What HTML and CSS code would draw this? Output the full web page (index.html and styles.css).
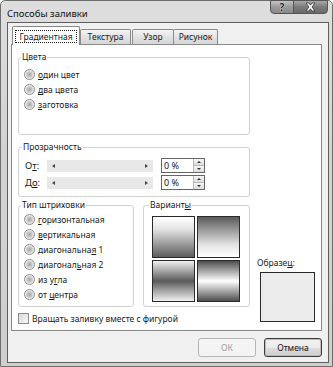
FILE: index.html
```html
<!DOCTYPE html>
<html>
  <head>
    <title>Способы заливки</title>
    <meta charset="UTF-8" />
    <link rel="stylesheet" href="styles.css">
  </head>
  <body>
    <div class="window">
      <div class="titlebar">
        <span class="title">Способы заливки</span>
        <div class="caption-buttons">
          <span class="cap-btn help">?</span>
          <span class="cap-btn close">
            <svg width="13" height="10" viewBox="0 0 13 10">
              <path d="M2 1h3l1.5 2.2L8 1h3L8 5l3 4H8L6.5 6.8 5 9H2l3-4z" fill="#fff" stroke="#333" stroke-width="0.8" />
            </svg>
          </span>
        </div>
      </div>

      <div class="client">
        <div class="tabs">
          <span class="tab active"><span class="focus">Градиентная</span></span>
          <span class="tab tab-texture">Текстура</span>
          <span class="tab tab-pattern">Узор</span>
          <span class="tab tab-picture">Рисунок</span>
        </div>

        <div class="panel">
          <fieldset class="group colors">
            <legend>Цвета</legend>
            <label class="radio"><span class="dot"></span><span><u>о</u>дин цвет</span></label>
            <label class="radio"><span class="dot"></span><span><u>д</u>ва цвета</span></label>
            <label class="radio"><span class="dot"></span><span><u>з</u>аготовка</span></label>
          </fieldset>

          <fieldset class="group transparency">
            <legend>Прозрачность</legend>
            <div class="trow">
              <span class="tlabel">О<u>т</u>:</span>
              <div class="slider"><i class="arr-left"></i><i class="arr-right"></i></div>
              <div class="spin">
                <span class="val">0 %</span>
                <span class="arrows"><i class="up"></i><i class="down"></i></span>
              </div>
            </div>
            <div class="trow">
              <span class="tlabel">Д<u>о</u>:</span>
              <div class="slider"><i class="arr-left"></i><i class="arr-right"></i></div>
              <div class="spin">
                <span class="val">0 %</span>
                <span class="arrows"><i class="up"></i><i class="down"></i></span>
              </div>
            </div>
          </fieldset>

          <div class="lower">
            <div class="lower-left">
              <div class="lower-groups">
                <fieldset class="group hatch">
                  <legend>Тип штриховки</legend>
                  <label class="radio"><span class="dot"></span><span><u>г</u>оризонтальная</span></label>
                  <label class="radio"><span class="dot"></span><span><u>в</u>ертикальная</span></label>
                  <label class="radio"><span class="dot"></span><span>диагональна<u>я</u> 1</span></label>
                  <label class="radio"><span class="dot"></span><span>диагонал<u>ь</u>ная 2</span></label>
                  <label class="radio"><span class="dot"></span><span>из у<u>г</u>ла</span></label>
                  <label class="radio"><span class="dot"></span><span>от <u>ц</u>ентра</span></label>
                </fieldset>
                <fieldset class="group variants">
                  <legend>Вариант<u>ы</u></legend>
                  <div class="tiles">
                    <span class="tile t1"></span>
                    <span class="tile t2"></span>
                    <span class="tile t3"></span>
                    <span class="tile t4"></span>
                  </div>
                </fieldset>
              </div>
              <label class="check"><span class="box"></span><span>Вращать заливку вместе с фигурой</span></label>
            </div>
            <div class="sample">
              <span class="sample-label">Образе<u>ц</u>:</span>
              <div class="sample-box"></div>
            </div>
          </div>
        </div>

        <div class="buttons">
          <button class="btn" disabled>ОК</button>
          <button class="btn default">Отмена</button>
        </div>
      </div>
    </div>
  </body>
</html>
```

FILE: styles.css
```css
body {
  margin: 0;
  font-family: "Noto Sans", sans-serif;
  font-size: 8.5px;
  color: #1a1a1a;
}
u {
  text-decoration-thickness: 1px;
  text-underline-offset: 1px;
}
.window {
  width: 333px;
  height: 367px;
  box-sizing: border-box;
  border: 1px solid #6e6e6e;
  border-radius: 5px 5px 0 0;
  background: linear-gradient(#dedede, #d3d3d3 40%, #cfcfcf);
  display: flex;
  flex-direction: column;
}
.titlebar {
  height: 21px;
  display: flex;
  justify-content: space-between;
  align-items: flex-start;
}
.title {
  padding: 6px 0 0 6px;
  font-size: 9.5px;
  line-height: 13px;
  color: #111;
}
.caption-buttons {
  display: flex;
  margin: -1px 4px 0 0;
}
.cap-btn {
  height: 14px;
  display: flex;
  align-items: center;
  justify-content: center;
  border: 1px solid #555;
  box-sizing: border-box;
}
.help {
  width: 24px;
  border-radius: 0 0 0 4px;
  background: linear-gradient(#c4c4c4, #9a9a9a 50%, #8a8a8a);
  color: #222;
  font-weight: bold;
  font-size: 10px;
  text-shadow: 0 0 1px #fff, 0 0 1px #fff;
}
.close {
  width: 35px;
  margin-left: -1px;
  border-radius: 0 0 4px 0;
  background: linear-gradient(#a8a8a8, #7a7a7a 50%, #6a6a6a);
}
.client {
  margin: 0 3px 3px 6px;
  flex: 1;
  border: 1px solid #5e5e5e;
  background: #f0f0f0;
  padding: 4px 6px 0 3px;
  display: flex;
  flex-direction: column;
}
.tabs {
  display: flex;
  align-items: flex-end;
  padding-left: 1px;
  height: 17px;
  position: relative;
  z-index: 1;
}
.tab {
  height: 14px;
  line-height: 14px;
  box-sizing: content-box;
  text-align: center;
  border: 1px solid #8a8a8a;
  border-bottom: none;
  background: linear-gradient(#f4f4f4, #e2e2e2 50%, #d6d6d6);
  margin-left: -1px;
  border-radius: 2px 2px 0 0;
}
.tab-texture {
  width: 49px;
  margin-left: 0;
}
.tab-pattern {
  width: 40px;
  margin-left: 1px;
}
.tab-picture {
  width: 43px;
  margin-left: -1px;
}
.tab.active {
  margin-left: 0;
  width: 66px;
  height: 18px;
  margin-bottom: -1px;
  background: #fff;
  display: flex;
  align-items: center;
  justify-content: center;
}
.focus {
  border: 1px dotted #222;
  padding: 0 3px;
  line-height: 11px;
}
.panel {
  height: 287px;
  box-sizing: border-box;
  border: 1px solid #8a8a8a;
  background: #fff;
  padding: 0 6px;
}
.group {
  margin: 0;
  border: 1px solid #d0d0d0;
  border-radius: 3px;
  min-width: 0;
}
.group legend {
  padding: 0 1px;
  margin-left: -3px;
  line-height: 12px;
}
.colors {
  width: 232px;
  box-sizing: border-box;
  margin-top: 6px;
  padding: 4px 0 22px 5px;
}
.radio {
  display: flex;
  align-items: center;
  height: 15px;
}
.dot {
  width: 11px;
  height: 11px;
  box-sizing: border-box;
  border-radius: 50%;
  border: 1px solid #8e8e8e;
  background: radial-gradient(circle, #a8a8a8 0, #c6c6c6 2.5px, #dedede 3.5px, #f4f4f4 5px);
  margin-right: 3px;
}
.transparency {
  width: 232px;
  box-sizing: border-box;
  margin-top: 6px;
  padding: 4px 0 5px 6px;
}
.trow {
  display: flex;
  align-items: center;
  height: 17px;
}
.tlabel {
  width: 22px;
  font-size: 9.5px;
}
.slider {
  width: 106px;
  height: 12px;
  background: #e8e8e8;
  display: flex;
  align-items: center;
  justify-content: space-between;
  padding: 0 5px;
  box-sizing: border-box;
}
.arr-left,
.arr-right {
  width: 0;
  height: 0;
  border-top: 2.5px solid transparent;
  border-bottom: 2.5px solid transparent;
}
.arr-left {
  border-right: 3px solid #444;
}
.arr-right {
  border-left: 3px solid #444;
}
.spin {
  margin-left: 8px;
  width: 44px;
  height: 15px;
  box-sizing: border-box;
  border: 1px solid #666;
  background: #fff;
  display: flex;
  justify-content: space-between;
}
.val {
  padding-left: 2px;
  line-height: 13px;
  font-size: 9px;
}
.arrows {
  width: 10px;
  display: flex;
  flex-direction: column;
  border-left: 1px solid #b8b8b8;
}
.arrows i {
  flex: 1;
  background: linear-gradient(#f6f6f6, #dcdcdc);
  display: flex;
  align-items: center;
  justify-content: center;
}
.arrows i + i {
  border-top: 1px solid #b8b8b8;
}
.up::after,
.down::after {
  content: "";
  border-left: 2px solid transparent;
  border-right: 2px solid transparent;
}
.up::after {
  border-bottom: 2px solid #333;
}
.down::after {
  border-top: 2px solid #333;
}
.lower {
  display: flex;
  margin-top: 2px;
}
.lower-groups {
  display: flex;
  gap: 9px;
}
.hatch {
  width: 116px;
  box-sizing: border-box;
  padding: 1px 0 4px 5px;
}
.variants {
  width: 107px;
  box-sizing: border-box;
  padding: 5px 0 4px 8px;
}
.tiles {
  display: grid;
  grid-template-columns: 43px 43px;
  grid-auto-rows: 42px;
  gap: 2px;
}
.tile {
  border: 1px solid #2a2a2a;
}
.t1 {
  background: linear-gradient(#ffffff, #e4e4e4 30%, #5c5c5c);
}
.t2 {
  background: linear-gradient(#5a5a5a, #e4e4e4 70%, #ffffff);
}
.t3 {
  background: linear-gradient(#f0f0f0, #5a5a5a 50%, #f0f0f0);
}
.t4 {
  background: linear-gradient(#4e4e4e, #ffffff 50%, #4e4e4e);
}
.check {
  display: flex;
  align-items: center;
  margin-top: 5px;
  height: 12px;
}
.box {
  width: 11px;
  height: 11px;
  box-sizing: border-box;
  border: 1px solid #8e8e8e;
  background: linear-gradient(135deg, #d8d8d8, #f8f8f8);
  margin-right: 3px;
}
.sample {
  margin-left: 7px;
  display: flex;
  flex-direction: column;
  justify-content: flex-end;
}
.sample-label {
  line-height: 12px;
  margin-bottom: 3px;
}
.sample-box {
  width: 55px;
  height: 50px;
  box-sizing: border-box;
  margin: 0 0 2px 3px;
  border: 1px solid #2a2a2a;
  background: #ececec;
}
.buttons {
  display: flex;
  justify-content: flex-end;
  gap: 8px;
  margin-top: 7px;
}
.btn {
  width: 58px;
  height: 19px;
  font: inherit;
  border: 1px solid #707070;
  border-radius: 3px;
  background: linear-gradient(#f2f2f2, #ebebeb 50%, #dddddd 51%, #cfcfcf);
  color: #111;
  padding: 0;
}
.btn:disabled {
  border-color: #b5b5b5;
  background: #f4f4f4;
  color: #9a9a9a;
}
.btn.default {
  border-color: #3c3c3c;
  box-shadow: inset 0 0 0 1px #bdbdbd;
}
```
